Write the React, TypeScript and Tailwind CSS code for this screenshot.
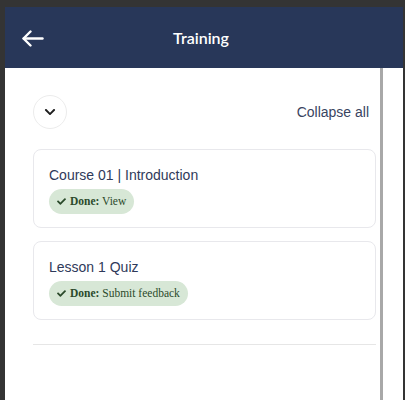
import { FaCheck, FaChevronDown } from "react-icons/fa";

const items = [
  { title: "Course 01 | Introduction", action: "View" },
  { title: "Lesson 1 Quiz", action: "Submit feedback" },
];

export default function App() {
  return (
    <div className="w-[405px] h-[400px] overflow-hidden bg-[#343434] pt-[7px] pl-[5px] pr-[2px] flex flex-col">
      <header className="h-[61px] shrink-0 bg-[#283759] flex items-center relative">
        <button className="absolute left-[17px] top-[23px] text-white">
          <svg width="22" height="17" viewBox="0 0 22 17" fill="none" stroke="currentColor" strokeWidth="2.4" strokeLinecap="round" strokeLinejoin="round">
            <path d="M20.5 8.5H1.8" />
            <path d="M8.5 1.5L1.5 8.5l7 7" />
          </svg>
        </button>
        <h1 className="w-full text-center pr-[6px] text-white text-[16px] font-semibold" style={{ fontFamily: "Lato, 'Noto Sans', sans-serif" }}>
          Training
        </h1>
      </header>

      <div className="flex-1 flex bg-white">
        <main className="flex-1 pl-[28px] pr-[4px] pt-[27px]" style={{ fontFamily: "'Liberation Sans', Arial, sans-serif" }}>
          <div className="flex items-center justify-between">
            <button className="w-[34px] h-[34px] rounded-full border border-[#ececec] flex items-center justify-center text-[#1f1f1f]">
              <FaChevronDown size={12} />
            </button>
            <span className="text-[14px] text-[#39445f] pr-[7px]">Collapse all</span>
          </div>

          <div className="mt-[20px] flex flex-col gap-[13px]">
            {items.map((item) => (
              <div key={item.title} className="h-[79px] rounded-[8px] border border-[#e8e8ec] pl-[15px] pt-[15px]">
                <p className="text-[14px] leading-[20px] text-[#2f3a5a]">{item.title}</p>
                <div className="mt-[4px] inline-flex items-center gap-[4px] h-[25px] px-[8px] rounded-full bg-[#d7e7d6] text-[#2b4a2b] text-[11.5px]" style={{ fontFamily: "'Liberation Serif', 'Times New Roman', serif" }}>
                  <FaCheck size={9} />
                  <span>
                    <b>Done:</b> {item.action}
                  </span>
                </div>
              </div>
            ))}
          </div>

          <div className="mt-[24px] border-t border-[#e6e6e6]" />
        </main>
        <div className="w-[3px] bg-[#a8a8a8]" />
        <div className="w-[20px]" />
      </div>
    </div>
  );
}
